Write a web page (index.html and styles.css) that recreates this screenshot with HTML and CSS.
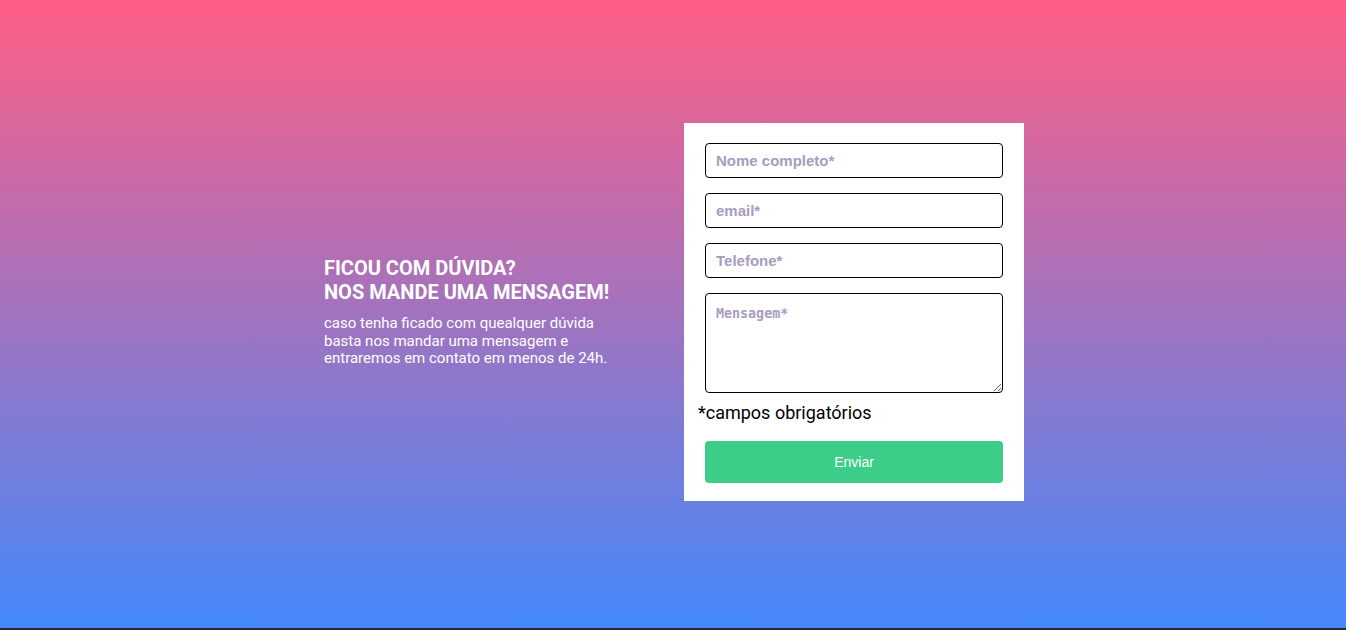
FILE: index.html
```html
<!DOCTYPE html>
<html lang="pt">
<head>
<meta charset="utf-8">
<title>Contato</title>
<link rel="stylesheet" href="styles.css">
</head>
<body>
<section class="contact">
  <div class="intro">
    <h2 class="intro-title">FICOU COM DÚVIDA?<br>NOS MANDE UMA MENSAGEM!</h2>
    <p class="intro-text">caso tenha ficado com quealquer dúvida basta nos mandar uma mensagem e entraremos em contato em menos de 24h.</p>
  </div>
  <form class="card">
    <input class="field" type="text" placeholder="Nome completo*">
    <input class="field" type="email" placeholder="email*">
    <input class="field" type="tel" placeholder="Telefone*">
    <textarea class="field area" placeholder="Mensagem*"></textarea>
    <p class="note">*campos obrigatórios</p>
    <button class="send" type="button">Enviar</button>
  </form>
</section>
</body>
</html>
```
FILE: styles.css
```css
html, body {
  margin: 0;
  padding: 0;
}
body {
  background: #2b2b2b;
  height: 630px;
  overflow: hidden;
}
.contact {
  box-sizing: border-box;
  height: 628px;
  padding: 0 0 4px 2px;
  background: linear-gradient(to bottom, #ff5e84 0%, #4388fa 100%);
  display: flex;
  align-items: center;
  justify-content: center;
  gap: 60px;
  font-family: Roboto, "Liberation Sans", sans-serif;
}
.intro {
  width: 300px;
  color: #fff;
}
.intro-title {
  margin: 0 0 11px;
  font-size: 20px;
  line-height: 24px;
  font-weight: 700;
}
.intro-text {
  margin: 0;
  font-size: 15px;
  line-height: 17.5px;
}
.card {
  width: 340px;
  box-sizing: border-box;
  background: #fff;
  padding: 20px 21px 18px;
  display: flex;
  flex-direction: column;
}
.field {
  box-sizing: border-box;
  width: 298px;
  height: 35px;
  margin: 0 0 15px;
  padding: 0 10px;
  border: 1px solid #000;
  border-radius: 4px;
  font-family: "Liberation Sans", Arial, sans-serif;
  font-size: 15px;
  font-weight: 700;
  color: #333;
  outline: none;
}
.field::placeholder {
  color: #a99bc0;
}
.area {
  height: 100px;
  margin-bottom: 0;
  padding: 12px 10px 10px;
  font-family: "DejaVu Sans Mono", monospace;
  font-size: 13.33px;
  resize: vertical;
}
.note {
  margin: 8px 0 0 -7px;
  font-size: 18px;
  line-height: 24px;
  color: #000;
}
.send {
  margin-top: 16px;
  width: 298px;
  height: 42px;
  border: none;
  border-radius: 4px;
  background: #3ccd88;
  color: #fff;
  font-family: "Liberation Sans", Arial, sans-serif;
  font-size: 14px;
}
```
